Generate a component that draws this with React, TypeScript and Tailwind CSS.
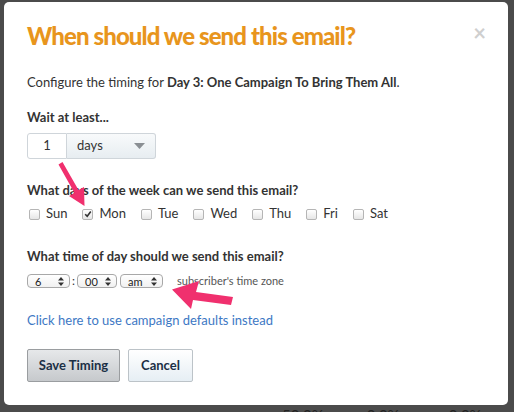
import React from 'react';

const days = ['Sun', 'Mon', 'Tue', 'Wed', 'Thu', 'Fri', 'Sat'];

const UpDown: React.FC = () => (
  <svg width="6" height="9" viewBox="0 0 6 9" className="shrink-0">
    <path d="M3 0 L6 3.5 L0 3.5 Z M3 9 L6 5.5 L0 5.5 Z" fill="#333" />
  </svg>
);

const MiniSelect: React.FC<{ value: string; width: string }> = ({ value, width }) => (
  <div
    className={`${width} h-[14px] flex items-center justify-between pl-[7px] pr-[5px] rounded-[4px] border border-[#a8a8a8] bg-gradient-to-b from-white to-[#f1f1f1] text-[11px] leading-none text-[#222]`}
  >
    <span>{value}</span>
    <UpDown />
  </div>
);

const Checkbox: React.FC<{ checked?: boolean }> = ({ checked }) => (
  <span className="w-[11px] h-[11px] rounded-[2px] border border-[#b5b5b5] bg-gradient-to-b from-white to-[#e6e6e6] flex items-center justify-center shrink-0">
    {checked && (
      <svg width="8" height="8" viewBox="0 0 8 8">
        <path d="M1.2 4.2 L3.2 6.2 L6.8 1.5" stroke="#333" strokeWidth="1.6" fill="none" />
      </svg>
    )}
  </span>
);

const App: React.FC = () => {
  return (
    <div
      className="relative w-[514px] h-[412px] overflow-hidden bg-[#4b4b4b] pt-[2px] pl-[4px]"
      style={{ fontFamily: 'Lato, "Open Sans", Arial, sans-serif' }}
    >
      {/* page behind the overlay */}
      <div className="absolute left-0 right-0 top-[404px] flex pl-[282px] gap-[43px] text-[15px] text-[#222]">
        <span>50.0%</span>
        <span>0.0%</span>
        <span className="ml-[6px]">0.0%</span>
      </div>

      <div className="relative w-[504px] h-[403px] bg-white rounded-[5px] pl-[23px] pr-[24px] pt-[18px] text-[#333]">
        <button className="absolute right-[22px] top-[20px] text-[22px] leading-none font-bold text-[#cfcfcf]">×</button>

        <h1 className="text-[24px] leading-[32px] font-black text-[#e8951d] tracking-[-0.9px]">
          When should we send this email?
        </h1>

        <p className="mt-[22px] text-[13px] leading-[16px]">
          Configure the timing for <b>Day 3: One Campaign To Bring Them All</b>.
        </p>

        <p className="mt-[19px] text-[13px] leading-[16px] font-bold">Wait at least...</p>

        <div className="mt-[8px] flex h-[26px] w-[129px]">
          <div className="w-[40px] border border-[#cfd5da] rounded-l-[3px] flex items-center justify-center text-[13px]">1</div>
          <div className="flex-1 border border-l-0 border-[#cfd5da] rounded-r-[3px] bg-gradient-to-b from-[#f8fafb] to-[#e7edf1] flex items-center justify-between pl-[10px] pr-[10px] text-[13px]">
            <span>days</span>
            <svg width="11" height="6" viewBox="0 0 11 6">
              <path d="M0 0 L11 0 L5.5 6 Z" fill="#8a8f93" />
            </svg>
          </div>
        </div>

        <p className="mt-[23px] text-[13px] leading-[16px] font-bold">What days of the week can we send this email?</p>

        <div className="mt-[8px] flex items-center h-[16px] text-[13px] pl-[2px]">
          {days.map((d) => (
            <label key={d} className="flex items-center gap-[6px] mr-[15px]">
              <Checkbox checked={d === 'Mon'} />
              <span>{d}</span>
            </label>
          ))}
        </div>

        <p className="mt-[26px] text-[13px] leading-[16px] font-bold">What time of day should we send this email?</p>

        <div className="mt-[9px] flex items-center h-[16px]">
          <MiniSelect value="6" width="w-[43px]" />
          <span className="mx-[2px] text-[12px]">:</span>
          <MiniSelect value="00" width="w-[40px]" />
          <span className="w-[3px]" />
          <MiniSelect value="am" width="w-[43px]" />
          <span className="ml-[14px] text-[11px] text-[#555]">subscriber's time zone</span>
        </div>

        <a className="block mt-[23px] text-[13px] leading-[16px] text-[#3d78c4]">Click here to use campaign defaults instead</a>

        <div className="mt-[21px] flex gap-[8px]">
          <button className="w-[93px] h-[33px] rounded-[2px] border border-[#9a9da0] bg-gradient-to-b from-[#e6e8ea] to-[#c6c9cc] text-[13px] font-bold text-[#1b2f45]">
            Save Timing
          </button>
          <button className="w-[65px] h-[33px] rounded-[2px] border border-[#bcc3c8] bg-gradient-to-b from-white to-[#e6eef4] text-[13px] font-bold text-[#1b2f45]">
            Cancel
          </button>
        </div>
      </div>

      {/* annotation arrows */}
      <svg className="absolute left-0 top-0 pointer-events-none" width="514" height="412" viewBox="0 0 514 412">
        <g fill="#f0306e">
          <path d="M58.5 164.5 L62.5 162 L78.5 190 L84 187 L84.5 206 L69 196 L74.5 193 Z" />
          <path d="M172 289.5 L199 281 L196 292 L233 297 L231 305 L193 300 L191 309 Z" />
        </g>
      </svg>
    </div>
  );
};

export default App;
